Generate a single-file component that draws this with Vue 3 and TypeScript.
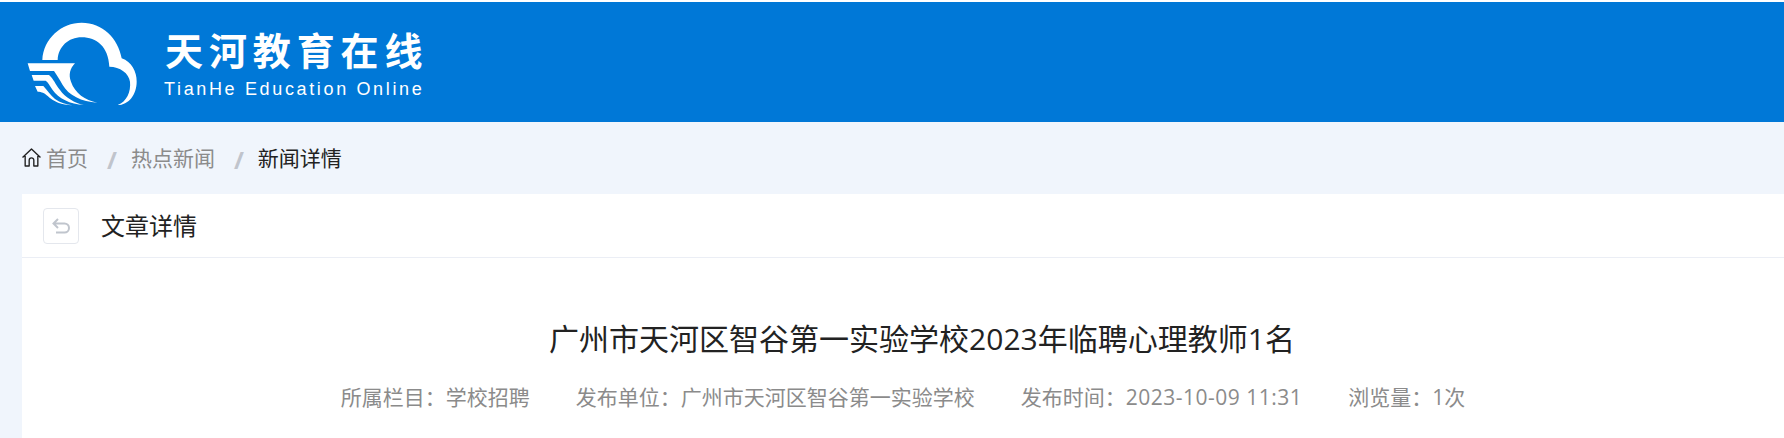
<script setup lang="ts">
const meta = [
  { label: '所属栏目：', value: '学校招聘' },
  { label: '发布单位：', value: '广州市天河区智谷第一实验学校' },
  { label: '发布时间：', value: '2023-10-09 11:31', wide: true },
  { label: '浏览量：', value: '1次' },
]
</script>

<template>
  <div class="page">
    <header class="top">
      <svg class="logo" viewBox="0 0 405 300" width="135" height="100">
        <path fill="#fff" d="M82 150C85 85 140 38 200 38C262 38 310 85 320 145C350 155 365 185 365 215C365 255 340 285 308 285C335 275 348 245 345 215C342 190 315 170 283 170C280 110 245 82 200 82C160 82 130 110 128 150Z" />
        <path fill="#fff" d="M38 160H180C165 175 160 195 168 215C180 250 210 270 247 278C200 276 160 255 143 225C133 207 125 195 117 183H45Z" />
        <path fill="#fff" d="M50 195H102C115 205 122 225 135 240C150 262 180 280 207 285C165 283 130 265 113 240C103 225 100 218 92 212H56Z" />
        <path fill="#fff" d="M60 228H85C97 240 105 255 120 267C135 278 155 283 172 286C140 285 115 275 98 258C90 250 85 248 72 245H68Z" />
      </svg>
      <div class="brand">
        <div class="brand-cn">天河教育在线</div>
        <div class="brand-en">TianHe Education Online</div>
      </div>
    </header>

    <nav class="crumbs">
      <svg class="home" viewBox="1 1 18 18" width="19" height="19">
        <path fill="none" stroke="#222" stroke-width="1.300" stroke-linejoin="round" d="M1.500 10L10 2l8.500 8M4 8.500V18h3.800v-5.500a2.200 2.200 0 0 1 4.400 0V18H16V8.500" />
      </svg>
      <span class="crumb">首页</span>
      <span class="sep">/</span>
      <span class="crumb">热点新闻</span>
      <span class="sep">/</span>
      <span class="crumb current">新闻详情</span>
    </nav>

    <main class="card">
      <div class="card-head">
        <button class="back" type="button">
          <svg viewBox="0 0 20 18" width="20" height="18">
            <path fill="none" stroke="#c0c5cd" stroke-width="2" d="M7 2L2.500 6.500 7 11M2.500 6.500h11a4.500 4.500 0 0 1 0 9H5" />
          </svg>
        </button>
        <span class="card-title">文章详情</span>
      </div>
      <div class="article">
        <h1 class="title">广州市天河区智谷第一实验学校2023年临聘心理教师1名</h1>
        <div class="meta">
          <span v-for="item in meta" :key="item.label">{{ item.label }}<span :class="{ wide: item.wide }">{{ item.value }}</span></span>
        </div>
      </div>
    </main>
  </div>
</template>

<style>
html,
body {
  margin: 0;
  background: #fff;
  overflow: hidden;
}
</style>

<style scoped>
.page {
  height: 438px;
  background: #f0f5fc;
  font-family: "Open Sans", "Noto Sans CJK SC", sans-serif;
}

.page::before {
  content: "";
  display: block;
  height: 2px;
  background: #fff;
}

.top {
  height: 120px;
  background: #0078d7;
  display: flex;
  align-items: center;
  padding-left: 15px;
}

.logo {
  margin-top: -4px;
  flex: none;
}

.brand {
  margin-left: 15px;
  color: #fff;
}

.brand-cn {
  font-size: 38px;
  font-weight: 700;
  letter-spacing: 5.900px;
  line-height: 52px;
}

.brand-en {
  font-family: "Liberation Sans", sans-serif;
  font-size: 18px;
  letter-spacing: 2.650px;
  line-height: 22px;
  margin-top: 2px;
  margin-left: -1px;
}

.crumbs {
  height: 72px;
  box-sizing: border-box;
  padding: 0 0 2px 22px;
  display: flex;
  align-items: center;
  font-size: 21px;
  color: #8b8b8b;
}

.home {
  margin-right: 5px;
}

.sep {
  margin: 4px 14px 0 19px;
  font-size: 24px;
  font-weight: 700;
  color: #c0c4cc;
}

.current {
  color: #222;
}

.card {
  margin-left: 22px;
  background: #fff;
  height: 244px;
}

.card-head {
  height: 64px;
  box-sizing: border-box;
  border-bottom: 1px solid #ebeef5;
  display: flex;
  align-items: center;
  padding-left: 21px;
}

.back {
  width: 36px;
  height: 36px;
  padding: 0;
  box-sizing: border-box;
  border: 1px solid #e4e7ed;
  border-radius: 4px;
  background: #fff;
  display: flex;
  align-items: center;
  justify-content: center;
}

.card-title {
  margin: 0 0 2px 22px;
  font-size: 24px;
  color: #222;
}

.article {
  text-align: center;
}

.title {
  margin: 0;
  padding: 61px 0 0 38px;
  font-size: 30px;
  font-weight: 400;
  line-height: 40px;
  color: #222;
}

.meta {
  margin-top: 23px;
  display: flex;
  justify-content: center;
  gap: 46px;
  font-size: 21px;
  line-height: 30px;
  color: #8b8b8b;
}

.wide {
  letter-spacing: 0.500px;
}
</style>
